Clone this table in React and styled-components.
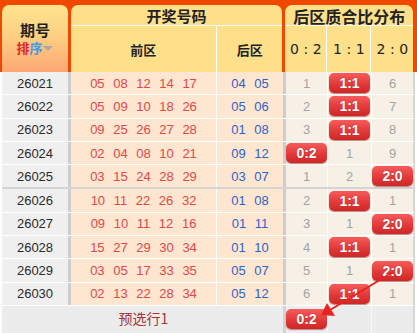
import React from "react";
import styled, { createGlobalStyle } from "styled-components";

const GlobalStyle = createGlobalStyle`
    html, body {
        margin: 0;
        padding: 0;
        background: #fff;
    }
    body {
        font-family: "Liberation Sans", "Noto Sans CJK SC", sans-serif;
    }
`;

const ORANGE = "#f14800";
const YELLOW = "#fee08b";
const CJK = `"Noto Sans CJK SC", "Noto Sans", sans-serif`;

const Board = styled.div`
    position: relative;
    width: 417px;
    height: 333px;
    overflow: hidden;
`;

const Head = styled.div`
    display: flex;
    gap: 3px;
    padding: 5px 4px 0 2px;
    height: 67px;
    background: ${ORANGE};
`;

const Tab = styled.div`
    display: flex;
    flex-direction: column;
    width: ${(p) => p.$w}px;
    border-radius: 7px 7px 0 0;
    background: ${YELLOW};
    overflow: hidden;
    font-family: ${CJK};
    color: #222;
`;

const PeriodTab = styled(Tab)`
    align-items: center;
    justify-content: center;
    gap: 4px;
    background: linear-gradient(#fee48d, #fdd083 45%, #fca774);
`;

const PeriodTitle = styled.div`
    font-size: 15px;
    font-weight: bold;
    line-height: 15px;
    height: 15px;
`;

const Sort = styled.div`
    display: flex;
    align-items: center;
    font-size: 13px;
    font-weight: bold;
    line-height: 14px;
    height: 14px;
`;

const SortChar = styled.span`
    color: ${(p) => p.$c};
`;

const Caret = styled.span`
    margin-left: 1px;
    width: 0;
    height: 0;
    border-left: 5px solid transparent;
    border-right: 5px solid transparent;
    border-top: 5px solid #a9a9a9;
`;

const TabTitle = styled.div`
    height: 21px;
    padding-top: 1px;
    box-sizing: border-box;
    border-bottom: 1px solid #fff;
    display: flex;
    align-items: center;
    justify-content: center;
    font-size: ${(p) => p.$size}px;
    font-weight: bold;
`;

const SubRow = styled.div`
    flex: 1;
    display: grid;
    grid-template-columns: ${(p) => p.$cols};
`;

const SubCell = styled.div`
    display: flex;
    align-items: center;
    justify-content: center;
    border-left: ${(p) => (p.$first ? "none" : "1px solid #fff")};
    font-size: ${(p) => (p.$ratio ? "14px" : "13px")};
    font-weight: ${(p) => (p.$ratio ? "normal" : "bold")};
    font-family: ${(p) => (p.$ratio ? `"DejaVu Sans", sans-serif` : CJK)};
    color: #222;
    white-space: pre;
`;

const Body = styled.div`
    padding: 0 2px;
`;

const Row = styled.div`
    display: grid;
    grid-template-columns: 66px 148px 67px 44px 44px 42px;
    height: 22.3px;
    border-bottom: ${(p) => (p.$groupEnd ? "2.5px solid #d4d4d4" : "1px solid #fff")};
    border-right: 2px solid #d6d6d6;
    box-sizing: content-box;
`;

const Cell = styled.div`
    box-sizing: border-box;
    display: flex;
    align-items: center;
    justify-content: center;
    background: ${(p) => p.$bg};
    border-left: ${(p) => p.$line || "none"};
    font-size: 13px;
`;

const PeriodCell = styled(Cell)`
    color: #2a2a2a;
`;

const Balls = styled.div`
    display: flex;
    gap: 8.6px;
    color: ${(p) => p.$color};
`;

const Count = styled.span`
    color: #a3a3a3;
    font-size: 13px;
`;

const Badge = styled.div`
    width: 41px;
    height: 20px;
    border-radius: 5px;
    display: flex;
    align-items: center;
    justify-content: center;
    background: linear-gradient(#f75b5b, #e23a3a 55%, #cf2626);
    box-shadow: 0 1px 1px rgba(120, 0, 0, 0.45);
    color: #fff;
    font-weight: bold;
    font-size: 14px;
    text-shadow: 0 0 1px rgba(120, 0, 0, 0.5);
`;

const Footer = styled.div`
    display: grid;
    grid-template-columns: 281px 44px 44px 42px;
    height: 27px;
    background: #ececec;
    border-right: 2px solid #d6d6d6;
    margin-left: 2px;
    margin-right: 2px;
`;

const FootCell = styled.div`
    display: flex;
    align-items: center;
    justify-content: center;
    border-left: ${(p) => p.$line || "none"};
    box-sizing: border-box;
`;

const Note = styled.span`
    font-family: ${CJK};
    font-size: 14px;
    color: #a83232;
    margin-left: 2px;
    margin-bottom: 2px;
`;

const Arrow = styled.svg`
    position: absolute;
    left: 0;
    top: 0;
    pointer-events: none;
`;

const rows = [
    ["26021", "05 08 12 14 17", "04 05", ["1", "1:1", "6"]],
    ["26022", "05 09 10 18 26", "05 06", ["2", "1:1", "7"]],
    ["26023", "09 25 26 27 28", "01 08", ["3", "1:1", "8"]],
    ["26024", "02 04 08 10 21", "09 12", ["0:2", "1", "9"]],
    ["26025", "03 15 24 28 29", "03 07", ["1", "2", "2:0"]],
    ["26026", "10 11 22 26 32", "01 08", ["2", "1:1", "1"]],
    ["26027", "09 10 11 12 16", "01 11", ["3", "1", "2:0"]],
    ["26028", "15 27 29 30 34", "01 10", ["4", "1:1", "1"]],
    ["26029", "03 05 17 33 35", "05 07", ["5", "1", "2:0"]],
    ["26030", "02 13 22 28 34", "05 12", ["6", "1:1", "1"]],
];

const GRAY_LINE = "3px solid #cdcdcd";
const WHITE_LINE = "1px solid #fff";

const Mark = ({ v }) => (v.includes(":") ? <Badge>{v}</Badge> : <Count>{v}</Count>);

const App = () => (
    <Board>
        <GlobalStyle />
        <Head>
            <PeriodTab $w={66}>
                <PeriodTitle>期号</PeriodTitle>
                <Sort>
                    <SortChar $c="#dc2a2a">排</SortChar>
                    <SortChar $c="#3a9bf0">序</SortChar>
                    <Caret />
                </Sort>
            </PeriodTab>
            <Tab $w={212}>
                <TabTitle $size={15}>开奖号码</TabTitle>
                <SubRow $cols="145px 67px">
                    <SubCell $first>前区</SubCell>
                    <SubCell>后区</SubCell>
                </SubRow>
            </Tab>
            <Tab $w={128}>
                <TabTitle $size={16}>后区质合比分布</TabTitle>
                <SubRow $cols="41px 44px 43px">
                    <SubCell $first $ratio>0 : 2</SubCell>
                    <SubCell $ratio>1 : 1</SubCell>
                    <SubCell $ratio>2 : 0</SubCell>
                </SubRow>
            </Tab>
        </Head>
        <Body>
            {rows.map(([period, front, back, dist], i) => (
                <Row key={period} $groupEnd={i === 4}>
                    <PeriodCell $bg="#efeff0">{period}</PeriodCell>
                    <Cell $bg="#fee6d1" $line={GRAY_LINE}>
                        <Balls $color="#e54848">
                            {front.split(" ").map((n, k) => (
                                <span key={k}>{n}</span>
                            ))}
                        </Balls>
                    </Cell>
                    <Cell $bg="#fee6d1" $line={WHITE_LINE}>
                        <Balls $color="#2f63c8">
                            {back.split(" ").map((n, k) => (
                                <span key={k}>{n}</span>
                            ))}
                        </Balls>
                    </Cell>
                    <Cell $bg="#f6f0e6" $line={GRAY_LINE}>
                        <Mark v={dist[0]} />
                    </Cell>
                    <Cell $bg="#f6f0e6" $line={WHITE_LINE}>
                        <Mark v={dist[1]} />
                    </Cell>
                    <Cell $bg="#f6f0e6" $line={WHITE_LINE}>
                        <Mark v={dist[2]} />
                    </Cell>
                </Row>
            ))}
        </Body>
        <Footer>
            <FootCell>
                <Note>预选行1</Note>
            </FootCell>
            <FootCell $line="3px solid #d2d2d2">
                <Badge>0:2</Badge>
            </FootCell>
            <FootCell $line="1px solid #f8f8f8" />
            <FootCell $line="1px solid #f8f8f8" />
        </Footer>
        <Arrow width="417" height="333" viewBox="0 0 417 333">
            <line x1="393" y1="272" x2="330" y2="310" stroke="#e8231f" strokeWidth="2" />
            <polygon points="321,315 327,303 335,316" fill="#e8231f" />
        </Arrow>
    </Board>
);

export default App;
